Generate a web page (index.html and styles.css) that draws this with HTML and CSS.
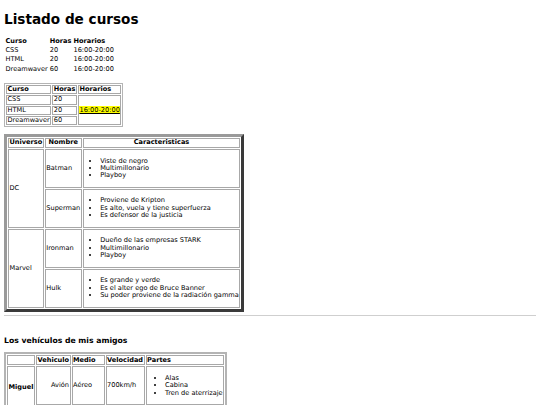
FILE: index.html
```html
<!DOCTYPE html>
<html lang="es">
<head>
<meta charset="utf-8">
<title>Listado de cursos</title>
<link rel="stylesheet" href="styles.css">
</head>
<body>
<h1 class="title">Listado de cursos</h1>

<table class="plain">
  <tr><th>Curso</th><th>Horas</th><th>Horarios</th></tr>
  <tr><td>CSS</td><td>20</td><td>16:00-20:00</td></tr>
  <tr><td>HTML</td><td>20</td><td>16:00-20:00</td></tr>
  <tr><td>Dreamwaver</td><td>60</td><td>16:00-20:00</td></tr>
</table>

<table class="boxed">
  <tr><th>Curso</th><th>Horas</th><th>Horarios</th></tr>
  <tr><td>CSS</td><td>20</td><td rowspan="3"><mark class="hl">16:00-20:00</mark></td></tr>
  <tr><td>HTML</td><td>20</td></tr>
  <tr><td>Dreamwaver</td><td>60</td></tr>
</table>

<table class="heroes">
  <tr><th>Universo</th><th>Nombre</th><th>Caracteristicas</th></tr>
  <tr>
    <td rowspan="2">DC</td>
    <td>Batman</td>
    <td><ul class="list"><li>Viste de negro</li><li>Multimillonario</li><li>Playboy</li></ul></td>
  </tr>
  <tr>
    <td>Superman</td>
    <td><ul class="list"><li>Proviene de Kripton</li><li>Es alto, vuela y tiene superfuerza</li><li>Es defensor de la justicia</li></ul></td>
  </tr>
  <tr>
    <td rowspan="2">Marvel</td>
    <td>Ironman</td>
    <td><ul class="list"><li>Dueño de las empresas STARK</li><li>Multimillonario</li><li>Playboy</li></ul></td>
  </tr>
  <tr>
    <td>Hulk</td>
    <td><ul class="list"><li>Es grande y verde</li><li>Es el alter ego de Bruce Banner</li><li>Su poder proviene de la radiación gamma</li></ul></td>
  </tr>
</table>

<hr class="rule">

<h3 class="subtitle">Los vehículos de mis amigos</h3>

<table class="cars">
  <tr><th></th><th>Vehiculo</th><th class="c-med">Medio</th><th>Velocidad</th><th>Partes</th></tr>
  <tr>
    <th rowspan="2">Miguel</th>
    <td class="right">Avión</td>
    <td>Aéreo</td>
    <td>700km/h</td>
    <td><ul class="list list-parts"><li>Alas</li><li>Cabina</li><li>Tren de aterrizaje</li></ul></td>
  </tr>
  <tr class="spacer">
    <td></td>
    <td></td>
    <td></td>
    <td></td>
  </tr>
</table>
</body>
</html>
```

FILE: styles.css
```css
html, body {
  background: #fff;
}
body {
  margin: 4px;
  font-family: "DejaVu Sans", Verdana, sans-serif;
  font-size: 6.6px;
  color: #000;
}
.title {
  font-size: 13.6px;
  font-weight: bold;
  margin: 7px 0 9.4px;
}
table {
  border-spacing: 1px;
  font-size: 6.6px;
  line-height: 7.3px;
}
th, td {
  padding: 0.5px;
  text-align: left;
  vertical-align: middle;
}
th {
  font-weight: bold;
}
.right {
  text-align: right;
}
.plain {
  margin-bottom: 8.5px;
}
.boxed {
  border: 1px solid #b4b4b4;
  margin-bottom: 6.5px;
}
.boxed th, .boxed td {
  border: 1px solid #a8a8a8;
  padding: 0 0.5px;
}
.hl {
  background: #ffff00;
  color: #000;
  text-decoration: underline;
}
.heroes {
  border: 3px solid;
  border-color: #9a9a9a #3a3a3a #3a3a3a #9a9a9a;
}
.heroes th, .heroes td {
  border: 1px solid #a8a8a8;
}
.heroes th {
  text-align: center;
}
.list {
  margin: 7px 0;
  padding-left: 16px;
  list-style: disc;
}
.list-parts {
  padding-left: 18px;
}
.rule {
  border: 0;
  border-top: 1px solid #cfcfcf;
  margin: 3px 0 0;
  height: 0;
}
.subtitle {
  font-size: 7.7px;
  font-weight: bold;
  margin: 20px 0 7.5px;
}
.cars {
  border: 2px solid #b4b4b4;
}
.cars th, .cars td {
  border: 1px solid #a8a8a8;
}
.c-med { width: 30px; }
.spacer td {
  height: 0;
  padding: 0;
}
```
